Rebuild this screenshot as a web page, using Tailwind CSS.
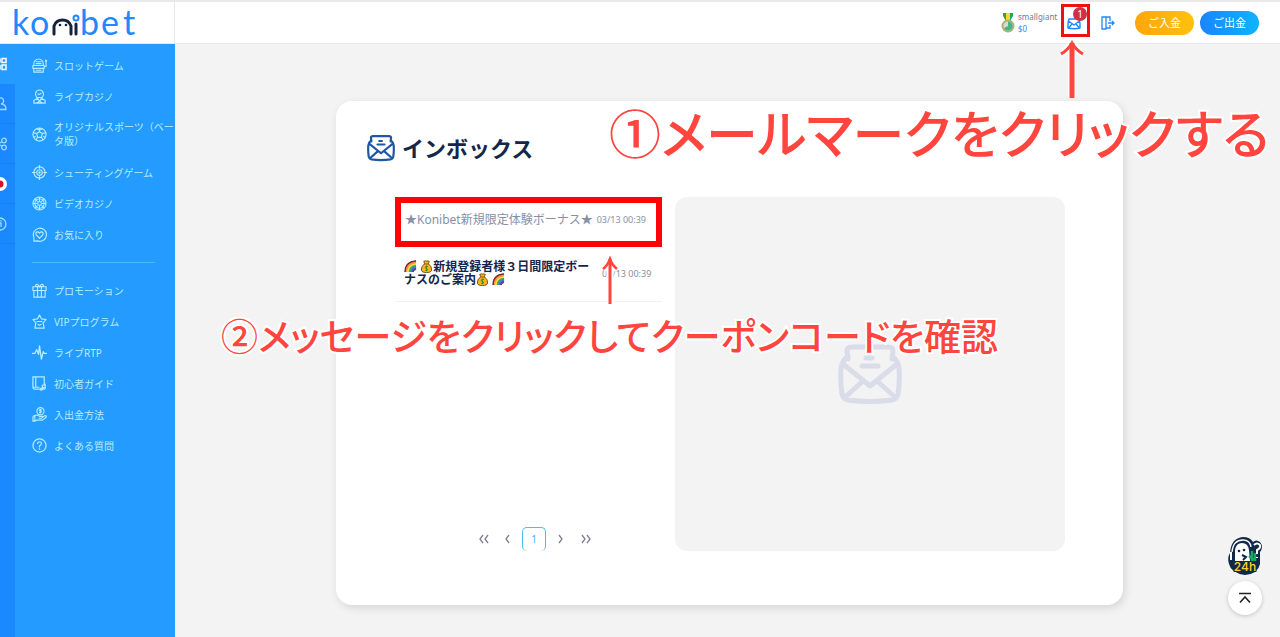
<!DOCTYPE html>
<html lang="ja">
<head>
<meta charset="utf-8">
<meta name="viewport" content="width=device-width, initial-scale=1">
<title>Konibet インボックス</title>
<script src="https://cdn.jsdelivr.net/npm/@tailwindcss/browser@4"></script>
</head>
<body class="relative flex min-h-screen flex-col overflow-x-hidden bg-[#f3f3f3] font-['Noto_Sans','Noto_Sans_CJK_JP',sans-serif] text-[#14264a]">

<svg class="hidden" aria-hidden="true">
  <symbol id="mail" viewBox="0 0 64 60" fill="none" stroke="currentColor" stroke-width="5" stroke-linejoin="round" stroke-linecap="round">
    <path d="M10 15 9 7Q9 3 14 3H50Q55 3 55 7L54 15M10 12Q4 17 3 24Q2 38 4 50Q5 55 10 56Q32 59 54 56Q59 55 60 50Q62 38 61 24Q60 17 54 12M5 20 32 42 59 20M6 54 25 37M58 54 39 37M28 14H34M24 22H40"/>
  </symbol>
  <symbol id="mail-small" viewBox="0 0 14 14" fill="none" stroke="currentColor" stroke-width="1.400" stroke-linejoin="round" stroke-linecap="round">
    <path d="M2 3Q1 5 1 8V12Q7 13.500 13 12V8Q13 5 12 3H2M1.500 5 7 9 12.500 5M1.500 12 5 8M12.500 12 9 8"/>
  </symbol>
  <symbol id="rainbow" viewBox="0 0 14 14" fill="none" stroke-width="1.900">
    <path d="M1.500 13Q1.500 2 13 1.500" stroke="#e3342f"/><path d="M3 13Q3 4 13 3" stroke="#f6993f"/><path d="M4.500 13Q4.500 5.500 13 4.500" stroke="#ffe12e"/><path d="M6 13Q6 7 13 6" stroke="#37b24d"/><path d="M7.500 13Q7.500 8.500 13 7.500" stroke="#2684e8"/><path d="M9 13Q9 10 13 9" stroke="#6a3fa8"/><path d="M1 13Q.5 1.500 13 .8M10 13Q10 11 13 10.200" stroke="#222" stroke-width=".8"/>
  </symbol>
  <symbol id="bag" viewBox="0 0 14 14">
    <path d="M5 4 4 1.500Q5.500 .5 7 1.200Q8.500 .5 10 1.500L9 4Q13 7 12.500 11Q12 13.500 7 13.500Q2 13.500 1.500 11Q1 7 5 4Z" fill="#fcb91c" stroke="#3d2a05" stroke-width=".8"/><path d="M4.500 4.300H9.500" stroke="#9a4e12"/><path d="M8.800 7.200Q7 6 5.800 7.200T7 9.200Q9 9.800 8 11T5.300 10.800M7 6V12" fill="none" stroke="#257b2b" stroke-width=".8"/>
  </symbol>
</svg>

<header class="flex h-11 shrink-0 items-center border-t-2 border-b border-[#e9e9ec] bg-white">
  <a href="#" aria-label="konibet" class="flex h-full w-[175px] shrink-0 items-center border-r border-[#e9e9ec]">
    <svg class="h-10 w-[174px] overflow-visible" viewBox="0 2 174 40" fill="none" stroke-linecap="round">
      <g class="fill-[#2188ff] font-[family-name:Lato] text-[34px]">
        <text x="12 30" y="34">ko</text><text x="80 101 123" y="34">bet</text>
      </g>
      <g stroke="#15233f" stroke-width="3">
        <path d="M54 33V25A9 9 0 0 1 71 25V33M76 23V33"/>
      </g>
      <circle cx="60" cy="24" r="1.300" fill="#15233f"/><circle cx="66" cy="24" r="1.300" fill="#15233f"/>
      <circle cx="76" cy="17" r="2.500" stroke="#2188ff" stroke-width="2"/>
    </svg>
  </a>
  <div class="ml-auto flex items-center pr-[21px]">
    <svg class="mr-[3px] h-5 w-3.5" viewBox="0 0 14 20"><path d="M2 0H12V3L9 8H5L2 3Z" fill="#25a55c"/><path d="M5 0H9V7H5Z" fill="#f5dd27"/><circle cx="7" cy="13" r="6.500" fill="#b8aa7c"/><circle cx="7" cy="13" r="4.500" fill="#d7ddcd"/><path d="M7 13V8.500A4.500 4.500 0 1 1 3 15Z" fill="#42b77e"/></svg>
    <div class="w-[43px] text-[8px] leading-3"><div class="text-[#737b91]">smallgiant</div><div class="text-[#3b8ef0]">$0</div></div>
    <button type="button" aria-label="メール" class="relative -mt-1 flex h-[33px] w-[29px] items-center justify-center border-[3px] border-[#ef1010] text-[#2188ff]">
      <svg class="mt-1 mr-1 size-3.5"><use href="#mail-small"/></svg>
      <span class="absolute top-0 right-0 flex size-3.5 items-center justify-center rounded-full bg-[#d22f46] text-[10px] leading-none text-white">1</span>
    </button>
    <button type="button" aria-label="ログアウト" class="mr-5 ml-[11px] text-[#2188ff]">
      <svg class="block size-3.5" viewBox="0 0 14 14" fill="none" stroke="currentColor" stroke-width="1.300"><path d="M1 1H5V13H1ZM5 1H9V5M9 9V12H5M7 7H13M11 5 13 7 11 9"/></svg>
    </button>
    <button type="button" class="mr-1.5 h-6 w-[59px] rounded-full bg-linear-to-r from-[#ffa60b] to-[#ffc10a] text-[11px] leading-none text-white">ご入金</button>
    <button type="button" class="h-6 w-[59px] rounded-full bg-linear-to-r from-[#1a85ff] to-[#0fb4ff] text-[11px] leading-none text-white">ご出金</button>
  </div>
</header>

<div class="flex flex-1">
  <nav aria-label="カテゴリー" class="w-[15px] shrink-0 overflow-hidden bg-[#1a88ff] text-[#9bdcff]">
    <a href="#" aria-label="ゲーム" class="flex h-10 items-center bg-[#239bff] text-white"><svg class="h-3.5 w-2" viewBox="0 0 8 14" fill="none" stroke="currentColor" stroke-width="1.500"><path d="M2 1.500H6V5.500H2ZM2 8H6V12.500H2ZM0 1.500V5.500M0 8V12.500"/></svg></a>
    <a href="#" aria-label="プロフィール" class="flex h-10 items-center border-b border-[#1680f2]"><svg class="h-3.5 w-2" viewBox="0 0 8 14" fill="none" stroke="currentColor" stroke-width="1.300"><path d="M0 1A3 3 0 0 1 1 7Q6 7 6 12.500H0"/></svg></a>
    <a href="#" aria-label="アフィリエイト" class="flex h-10 items-center border-b border-[#1680f2]"><svg class="h-3.5 w-2" viewBox="0 0 8 14" fill="none" stroke="currentColor" stroke-width="1.300"><circle cx="4" cy="3.500" r="2.300"/><circle cx="4" cy="10.500" r="2.300"/><path d="M0 6 2 5M0 8 2 9"/></svg></a>
    <a href="#" aria-label="言語" class="flex h-10 items-center border-b border-[#1680f2]"><svg class="h-3.5 w-2" viewBox="0 0 8 14"><circle cx="0" cy="7" r="7" fill="#fff"/><circle cx="0" cy="7" r="3.500" fill="#e00b25"/></svg></a>
    <a href="#" aria-label="情報" class="flex h-10 items-center border-b border-[#1680f2]"><svg class="h-3.5 w-2" viewBox="0 0 8 14" fill="none" stroke="currentColor" stroke-width="1.300"><circle cx="0" cy="7" r="6"/><path d="M0 6H1V10M1 3V4.500"/></svg></a>
  </nav>

  <nav aria-label="メインメニュー" class="w-40 shrink-0 bg-[#239bff] pt-1.5 text-[10px] leading-3.5 text-[#b5ecff]">
    <ul class="[&_a]:flex [&_a]:min-h-[31px] [&_a]:items-center [&_a]:gap-[7px] [&_a]:pl-[17px] [&_svg]:size-[15px] [&_svg]:shrink-0 [&_svg]:fill-none [&_svg]:stroke-current">
      <li><a href="#"><svg viewBox="0 0 16 16" stroke-width="1.200"><path d="M2 8V6A5 5 0 0 1 12 6V8M1 8H13V11H1ZM2 11V15H12V11M4 13H10M4 6H10M4 4H10M13 9H15V4"/><circle cx="15" cy="3" r=".7"/></svg>スロットゲーム</a></li>
      <li><a href="#"><svg viewBox="0 0 16 16" stroke-width="1.200"><path d="M5 9Q3 7 4 4Q5 1 8 1T12 4Q13 7 11 9ZM6 5Q8 7 10 4M6 9V10L2 12V15H14V12L10 10V9M6 10 8 13 10 10M5 15 8 13 11 15"/></svg>ライブカジノ</a></li>
      <li><a href="#" class="py-2"><svg viewBox="0 0 16 16" stroke-width="1.200"><circle cx="8" cy="8" r="7"/><path d="M8 5 11 7 10 11H6L5 7ZM8 5V1M11 7 15 6M10 11 12 14M6 11 4 14M5 7 1 6M5 2 8 3 11 2M2 11 4 10M14 11 12 10"/></svg><span class="min-w-0 flex-1 pb-px">オリジナルスポーツ（ベータ版）</span></a></li>
      <li><a href="#"><svg viewBox="0 0 16 16" stroke-width="1.200"><circle cx="8" cy="8" r="6"/><circle cx="8" cy="8" r="3"/><circle cx="8" cy="8" r=".7"/><path d="M8 0V4M8 12V16M0 8H4M12 8H16"/></svg>シューティングゲーム</a></li>
      <li><a href="#"><svg viewBox="0 0 16 16" stroke-width="1.100"><circle cx="8" cy="8" r="7"/><circle cx="8" cy="8" r="5"/><circle cx="8" cy="8" r="2"/><path d="M8 1V6M8 10V15M1 8H6M10 8H15M3 3 6 6M10 10 13 13M13 3 10 6M6 10 3 13"/></svg>ビデオカジノ</a></li>
      <li><a href="#"><svg viewBox="0 0 16 16" stroke-width="1.200"><path d="M2 15V11A7 7 0 1 1 6 14.800ZM8 12 4.500 8.500Q3.500 6 5.500 5.200Q7 5 8 6.500Q9 5 10.500 5.200Q12.500 6 11.500 8.500Z"/></svg>お気に入り</a></li>
      <li aria-hidden="true" class="my-3 mr-5 ml-[17px] border-t border-[#51b5ff]"></li>
      <li><a href="#"><svg viewBox="0 0 16 16" stroke-width="1.200"><path d="M1 4H15V8H1ZM2 8V15H14V8M6 4V15M10 4V15M8 4Q3 4 4 2Q6 0 8 4Q10 0 12 2Q13 4 8 4"/></svg>プロモーション</a></li>
      <li><a href="#"><svg viewBox="0 0 16 16" stroke-width="1.300" stroke-linejoin="round"><path d="M8 1 10.200 5.300 15 6 11.800 9.500 13 15H3L4.200 9.500 1 6 5.800 5.300ZM5 8H11M6 11 8 12 10 11"/></svg>VIPプログラム</a></li>
      <li><a href="#"><svg viewBox="0 0 16 16" stroke-width="1.400" stroke-linejoin="round"><path d="M0 9H3L5 5 7 10 8 1 10 15 12 7 13 9H16"/></svg>ライブRTP</a></li>
      <li><a href="#"><svg viewBox="0 0 16 16" stroke-width="1.300"><path d="M9 14H3Q1 14 1 12V1H13V9M4 1V12M1 12H8M11 15V10L14 9V13"/><circle cx="10" cy="14" r="1"/><circle cx="13" cy="13" r="1"/></svg>初心者ガイド</a></li>
      <li><a href="#"><svg viewBox="0 0 16 16" stroke-width="1.200"><circle cx="9" cy="4.500" r="3.800"/><path d="M10.500 3H8.500Q7 4 9 4.500T9 6H7.500M9 2V7M1 10 3 9Q6 8 8 10H11Q12 11 10 12H7M11 11 14 9Q16 9 15 11L11 14H5L3 15M1 10V15H3V9"/></svg>入出金方法</a></li>
      <li><a href="#"><svg viewBox="0 0 16 16" stroke-width="1.300"><circle cx="8" cy="8" r="7"/><path d="M6 6.500Q6 4 8 4T10 6Q10 7 8 8.500V10M8 11V12.500"/></svg>よくある質問</a></li>
    </ul>
  </nav>

  <main class="min-w-0 flex-1 pt-[57px] pb-8 pl-1">
    <section class="mx-auto max-w-[787px] rounded-2xl bg-white pt-[31px] pr-[58px] pb-[54px] pl-[31px] shadow-[2px_3px_8px_rgba(0,0,0,0.12)]">
      <h1 class="flex h-8 items-center gap-[7px] text-[22px] leading-8 font-bold">
        <svg class="size-7 text-[#1f57a4]"><use href="#mail"/></svg>インボックス
      </h1>
      <div class="mt-8 flex gap-[13px] pt-px pl-7">
        <div class="flex w-[267px] shrink-0 flex-col">
          <ul>
            <li><a href="#" class="flex h-[50px] items-center gap-1 border-[6px] border-[#fb0505] px-1 pb-1.5 text-[12px] leading-[13px] text-[#8790a4]"><span class="whitespace-nowrap">★Konibet新規限定体験ボーナス★</span><time class="text-[9px] whitespace-nowrap">03/13 00:39</time></a></li>
            <li class="border-b border-[#f1f1f3]"><a href="#" class="flex h-[54px] items-center gap-2 pb-0.5 pl-[9px] text-[12px] leading-[13px]">
              <span class="w-[190px] shrink-0 font-bold [&_svg]:inline-block [&_svg]:size-[13px] [&_svg]:align-[-2px]"><svg role="img" aria-label="虹"><use href="#rainbow"/></svg> <svg role="img" aria-label="お金"><use href="#bag"/></svg>新規登録者様３日間限定ボーナスのご案内<svg role="img" aria-label="お金"><use href="#bag"/></svg> <svg role="img" aria-label="虹"><use href="#rainbow"/></svg></span>
              <time class="text-[9px] whitespace-nowrap text-[#8790a4]">03/13 00:39</time></a></li>
          </ul>
          <div class="mt-auto flex h-6 items-center justify-center gap-[9px] pl-[15px] text-[#7c8291] [&_svg]:size-2.5 [&_svg]:fill-none [&_svg]:stroke-current">
            <button type="button" aria-label="最初" class="flex w-5 justify-center"><svg viewBox="0 0 10 10" stroke-width="1.300"><path d="M4 1 1 5 4 9M9 1 6 5 9 9"/></svg></button>
            <button type="button" aria-label="前へ" class="flex w-2.5 justify-center"><svg viewBox="0 0 10 10" stroke-width="1.300"><path d="M6 1 3 5 6 9"/></svg></button>
            <button type="button" class="h-6 w-6 rounded-[5px] border border-b-0 border-[#48bdf4] text-[10px] text-[#48aef4]">1</button>
            <button type="button" aria-label="次へ" class="flex w-2.5 justify-center"><svg viewBox="0 0 10 10" stroke-width="1.300"><path d="M4 1 7 5 4 9"/></svg></button>
            <button type="button" aria-label="最後" class="flex w-6 justify-center"><svg viewBox="0 0 10 10" stroke-width="1.300"><path d="M1 1 4 5 1 9M6 1 9 5 6 9"/></svg></button>
          </div>
        </div>
        <div class="flex min-h-[354px] min-w-0 flex-1 items-center justify-center rounded-xl bg-[#f3f3f3]">
          <svg class="h-[60px] w-16 text-[#dadce9]"><use href="#mail"/></svg>
        </div>
      </div>
    </section>
  </main>
</div>

<button type="button" aria-label="24時間サポート" class="absolute top-[536px] right-4 h-10 w-[38px]">
  <svg viewBox="0 0 38 40"><path d="M4 17Q5 2 17 1Q24 1 27 6Q30 3 34 6Q38 11 34 16V28Q32 38 19 39Q5 37 3 28Q1 22 4 17Z" fill="#10294a"/><path d="M6 16Q7 4 17 4Q24 4 25 11" fill="none" stroke="#fff" stroke-width="1.300"/><path d="M9 25V14Q10 7 16 7Q22 7 23 14L24 25H9Z" fill="#fff"/><circle cx="13" cy="15" r="1.300" fill="#10294a"/><circle cx="18" cy="14" r="1.300" fill="#10294a"/><path d="M5 16V24" fill="none" stroke="#fff" stroke-width="2"/><path d="M16 19 20 21 17 24" fill="none" stroke="#10294a" stroke-width="2"/><path d="M26 15V25M29 17V25M23 20 28 24" stroke="#18a963" stroke-width="2.500"/><path d="M28 9Q31 6 34 9Q35 12 31 14V18M31 21V22" fill="none" stroke="#fff" stroke-width="2"/><text x="19" y="35" text-anchor="middle" stroke="#10294a" stroke-width="2" paint-order="stroke" class="fill-[#ffd21f] font-[family-name:Inter] text-[12px] font-medium">24h</text></svg>
</button>
<button type="button" aria-label="ページ上部へ" class="absolute top-[581px] right-[18px] flex size-[34px] items-center justify-center rounded-full bg-white text-[#222] shadow-[0_1px_4px_rgba(0,0,0,0.2)]">
  <svg class="h-3 w-3" viewBox="0 0 12 12" fill="none" stroke="currentColor" stroke-width="1.600"><path d="M0 1.500H12M1 10.500 6 5 11 10.500"/></svg>
</button>

<p class="pointer-events-none absolute top-[96px] left-[609px] font-['Noto_Sans_CJK_JP',sans-serif] text-[52px] leading-[72px] font-medium whitespace-nowrap text-[#ff453d] [font-feature-settings:'palt'] [paint-order:stroke_fill] [-webkit-text-stroke:4px_white]">①メールマークをクリックする</p>
<p class="pointer-events-none absolute top-[299px] left-[221px] font-['Noto_Sans_CJK_JP',sans-serif] text-[37px] leading-[72px] font-medium whitespace-nowrap text-[#ff453d] [font-feature-settings:'palt'] [paint-order:stroke_fill] [-webkit-text-stroke:4px_white]">②メッセージをクリックしてクーポンコードを確認</p>
<svg class="pointer-events-none absolute top-10 left-[1060px] h-[59px] w-6" viewBox="0 0 24 59" fill="none"><path d="M12 3V58M1 14Q8 10 12 3Q16 10 23 14" stroke="#fff" stroke-width="7"/><path d="M12 3V58" stroke="#ff453d" stroke-width="5"/><path d="M1 14Q8 10 12 3Q16 10 23 14" stroke="#ff453d" stroke-width="3"/></svg>
<svg class="pointer-events-none absolute top-[256px] left-[602px] h-12 w-4" viewBox="0 0 16 48" fill="none"><path d="M8 3V48M1 13Q6 9 8 3Q10 9 15 13" stroke="#fff" stroke-width="7"/><path d="M8 3V48" stroke="#ff453d" stroke-width="3"/><path d="M1 13Q6 9 8 3Q10 9 15 13" stroke="#ff453d" stroke-width="2.500"/></svg>
</body>
</html>
